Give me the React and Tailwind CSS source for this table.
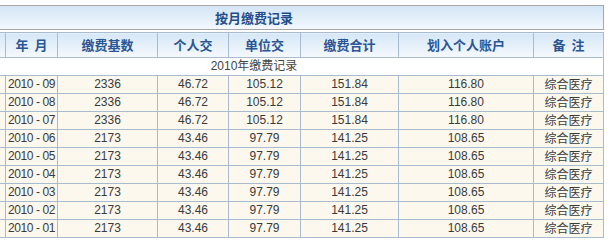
import React from "react";

const rows = [
  ["2010 - 09", "2336", "46.72", "105.12", "151.84", "116.80"],
  ["2010 - 08", "2336", "46.72", "105.12", "151.84", "116.80"],
  ["2010 - 07", "2336", "46.72", "105.12", "151.84", "116.80"],
  ["2010 - 06", "2173", "43.46", "97.79", "141.25", "108.65"],
  ["2010 - 05", "2173", "43.46", "97.79", "141.25", "108.65"],
  ["2010 - 04", "2173", "43.46", "97.79", "141.25", "108.65"],
  ["2010 - 03", "2173", "43.46", "97.79", "141.25", "108.65"],
  ["2010 - 02", "2173", "43.46", "97.79", "141.25", "108.65"],
  ["2010 - 01", "2173", "43.46", "97.79", "141.25", "108.65"],
];

const headers = ["", "年\u00a0\u00a0月", "缴费基数", "个人交", "单位交", "缴费合计", "划入个人账户", "备\u00a0\u00a0注"];

const App = () => {
  return (
    <div className="w-[610px] h-[242px] overflow-hidden bg-white font-['Liberation_Sans','Noto_Sans_CJK_SC',sans-serif]">
      <div className="ml-[-96px] w-[700px] pt-[5px]">
        {/* title bar */}
        <div className="h-[25px] border border-[#a7a7a7] bg-gradient-to-b from-[#d3e5f6] to-[#f3f8fd] flex items-center justify-center text-[13px] font-bold text-[#234d8b] font-['Noto_Sans_CJK_SC',sans-serif]">
          按月缴费记录
        </div>

        <table className="mt-[2px] w-[699px] table-fixed border-collapse text-[12px] text-[#3a3a3a]">
          <colgroup>
            <col className="w-[101px]" />
            <col className="w-[52px]" />
            <col className="w-[100px]" />
            <col className="w-[71px]" />
            <col className="w-[72px]" />
            <col className="w-[98px]" />
            <col className="w-[135px]" />
            <col className="w-[70px]" />
          </colgroup>
          <thead>
            <tr className="h-[25px]">
              {headers.map((h, i) => (
                <th
                  key={i}
                  className="border border-[#a9bccf] bg-gradient-to-b from-[#d6e7f7] to-[#f5f9fd] p-0 text-[13px] font-bold text-[#2a5695] whitespace-nowrap font-['Noto_Sans_CJK_SC',sans-serif]"
                >
                  {h}
                </th>
              ))}
            </tr>
          </thead>
          <tbody>
            <tr className="h-[18px]">
              <td colSpan={8} className="border border-[#a9bccf] bg-white p-0 text-center text-[12px] leading-[17px] text-[#444]">
                2010年缴费记录
              </td>
            </tr>
            {rows.map((r, idx) => (
              <tr key={idx} className="h-[18px] bg-[#fcf8ee]">
                <td className="border border-[#a9bccf] p-0"></td>
                <td className="border border-[#a9bccf] p-0 pl-[2px] text-left leading-[17px] whitespace-nowrap tracking-[-0.4px]">
                  {r[0]}
                </td>
                <td className="border border-[#a9bccf] p-0 text-center leading-[17px] whitespace-nowrap">{r[1]}</td>
                <td className="border border-[#a9bccf] p-0 text-center leading-[17px] whitespace-nowrap">{r[2]}</td>
                <td className="border border-[#a9bccf] p-0 text-center leading-[17px] whitespace-nowrap">{r[3]}</td>
                <td className="border border-[#a9bccf] p-0 text-center leading-[17px] whitespace-nowrap">{r[4]}</td>
                <td className="border border-[#a9bccf] p-0 text-center leading-[17px] whitespace-nowrap">{r[5]}</td>
                <td className="border border-[#a9bccf] p-0 pb-[2px] text-center leading-[15px] whitespace-nowrap font-['Noto_Sans_CJK_SC',sans-serif]">
                  综合医疗
                </td>
              </tr>
            ))}
          </tbody>
        </table>
      </div>
    </div>
  );
};

export default App;
